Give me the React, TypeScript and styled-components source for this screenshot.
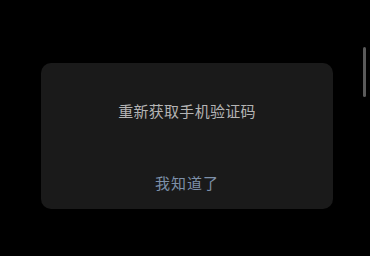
import React from 'react';
import styled, { createGlobalStyle } from 'styled-components';

const GlobalStyle = createGlobalStyle`
  html, body {
    margin: 0;
    padding: 0;
    background: #000;
    overflow: hidden;
  }
  body {
    font-family: "Noto Sans CJK SC", "Noto Sans", sans-serif;
  }
`;

const Page = styled.div`
  position: relative;
  width: 370px;
  height: 256px;
  background: #000;
  padding: 63px 37px 0 41px;
  box-sizing: border-box;
`;

const Dialog = styled.div`
  width: 292px;
  height: 146px;
  box-sizing: border-box;
  background: #1a1a1a;
  border-radius: 10px;
  display: flex;
  flex-direction: column;
  align-items: center;
  padding: 37px 0 15px;
`;

const Message = styled.div`
  font-size: 15px;
  line-height: 22px;
  letter-spacing: 0.3px;
  color: #b4b4b4;
`;

const ConfirmButton = styled.button`
  margin-top: auto;
  border: none;
  background: none;
  padding: 0;
  font-family: inherit;
  font-size: 15px;
  line-height: 22px;
  letter-spacing: 1px;
  color: #7d90a9;
  cursor: pointer;
`;

const ScrollThumb = styled.div`
  position: absolute;
  top: 47px;
  right: 4px;
  width: 3px;
  height: 50px;
  border-radius: 2px;
  background: #5a5a5a;
`;

export default function App() {
  return (
    <>
      <GlobalStyle />
      <Page>
        <Dialog>
          <Message>重新获取手机验证码</Message>
          <ConfirmButton>我知道了</ConfirmButton>
        </Dialog>
        <ScrollThumb />
      </Page>
    </>
  );
}
